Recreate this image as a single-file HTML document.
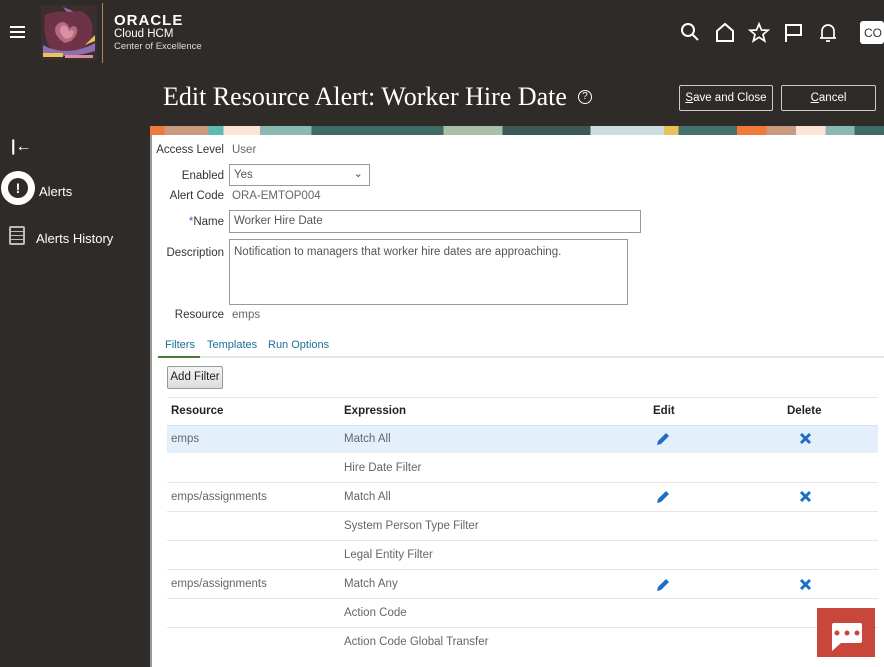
<!DOCTYPE html>
<html><head><style>
*{margin:0;padding:0;box-sizing:border-box}
body{width:884px;height:667px;overflow:hidden;background:#2f2b28;font-family:"Liberation Sans",sans-serif;position:relative}
.a{position:absolute}
.w{color:#fff}
.lbl{font-size:11.5px;color:#333;text-align:right;width:74px;left:150px}
.val{font-size:11.5px;color:#666}
.inp{border:1px solid #999;background:#fff;font-size:11.5px;color:#555;padding:4px 4px}
.th{font-size:11.5px;font-weight:bold;color:#222}
.td{font-size:11.5px;color:#666}
.ln{left:167px;width:711px;height:1px;background:#e6e6e6}
</style></head><body>
<!-- header -->
<div class="a" style="left:10px;top:26px;width:15px;height:2px;background:#fff;box-shadow:0 5px #fff,0 10px #fff"></div>
<svg class="a" style="left:41px;top:5px" width="56" height="55" viewBox="0 0 56 55">
<rect x="0" y="0" width="56" height="55" fill="#3a2f2e"/>
<path d="M22 2 L32 6 L28 10Z" fill="#8f6fb0"/>
<path d="M4 10 C16 4 30 8 40 6 C50 10 54 22 50 36 C44 46 30 50 12 46 C4 40 2 22 4 10Z" fill="#6e3346"/>
<path d="M16 20 C22 12 30 22 28 24 C34 16 42 26 30 36 L24 38 C14 32 12 24 16 20Z" fill="#b66a82"/>
<path d="M20 22 C24 18 28 24 28 27 C31 22 36 28 29 33 L25 34 C19 30 18 25 20 22Z" fill="#d9919f"/>
<path d="M2 40 C20 50 40 46 54 38 L54 46 C36 52 16 52 2 48Z" fill="#8f6fb0"/>
<rect x="2" y="48" width="20" height="4" fill="#e8c35a"/>
<rect x="24" y="50" width="28" height="3" fill="#d98fa0"/>
<path d="M44 40 L54 30 L54 36Z" fill="#e8c35a"/>
</svg>
<div class="a" style="left:102px;top:3px;width:1px;height:60px;background:#b08a4a"></div>
<div class="a w" style="left:114px;top:12px;font-size:15px;font-weight:bold;letter-spacing:1px">ORACLE</div>
<div class="a w" style="left:114px;top:28px;font-size:11.5px">Cloud HCM</div>
<div class="a" style="left:114px;top:41px;font-size:9.5px;color:#ddd">Center of Excellence</div>
<svg class="a" style="left:680px;top:22px" width="170" height="22" viewBox="0 0 170 22" fill="none" stroke="#fff" stroke-width="2">
<circle cx="8" cy="8" r="6"/><path d="M12.5 12.5 L18 18"/>
<path d="M37 19 V9 L45 2 L53 9 V19 Z"/>
<path d="M79 2 L81.5 8 L88 8.3 L83 12.5 L84.7 19 L79 15.3 L73.3 19 L75 12.5 L70 8.3 L76.5 8 Z" stroke-width="1.7"/>
<path d="M106 20 V3 H121 V13 H106"/>
<path d="M142 16 V9 A6 6 0 0 1 154 9 V16 Z M140 16 H156 M146 19 H150" stroke-width="1.7"/>
</svg>
<div class="a" style="left:860px;top:21px;width:24px;height:23px;background:#fff;border-radius:3px;font-size:12px;color:#333;padding:5px 0 0 4px">CO</div>
<div class="a w" style="left:163px;top:82px;font-family:'Liberation Serif',serif;font-size:26px">Edit Resource Alert: Worker Hire Date</div>
<div class="a" style="left:578px;top:90px;width:14px;height:14px;border:1.5px solid #fff;border-radius:50%;color:#fff;font-size:10px;text-align:center;line-height:11px">?</div>
<div class="a w" style="left:679px;top:85px;width:94px;height:26px;border:1px solid #ccc;border-radius:2px;font-size:11.5px;text-align:center;line-height:24px"><u>S</u>ave and Close</div>
<div class="a w" style="left:781px;top:85px;width:95px;height:26px;border:1px solid #ccc;border-radius:2px;font-size:11.5px;text-align:center;line-height:24px"><u>C</u>ancel</div>
<!-- sidebar -->
<div class="a w" style="left:11px;top:138px;font-size:16px;font-weight:bold">|←</div>
<div class="a" style="left:1px;top:171px;width:34px;height:34px;border-radius:50%;background:#fff"></div>
<div class="a" style="left:8px;top:178px;width:20px;height:20px;border-radius:50%;background:#2f2b28;color:#fff;font-weight:bold;font-size:14px;text-align:center;line-height:20px">!</div>
<div class="a w" style="left:39px;top:184px;font-size:13px">Alerts</div>
<div class="a" style="left:9px;top:226px;width:16px;height:19px;border:2px solid #bbb;border-radius:2px;background:repeating-linear-gradient(#2f2b28 0 3px,#bbb 3px 4px)"></div>
<div class="a w" style="left:36px;top:231px;font-size:13px">Alerts History</div>
<!-- content -->
<div class="a" style="left:150px;top:126px;width:734px;height:541px;background:#fff;border-left:2px solid #999"></div>
<div class="a" style="left:150px;top:126px;width:734px;height:9px;background:linear-gradient(90deg,#f07a3a 0 2%,#c99a80 2% 8%,#5fb9b5 8% 10%,#fde3d6 10% 15%,#8ab9b5 15% 22%,#3e6a68 22% 40%,#a8c0a8 40% 48%,#3b5a55 48% 60%,#cbdde0 60% 70%,#e8c35a 70% 72%,#44706d 72% 80%,#f07a3a 80% 84%,#c99a80 84% 88%,#fde3d6 88% 92%,#8ab9b5 92% 96%,#3e6a68 96%)"></div>
<div class="a lbl" style="top:144px;left:150px;width:74px">Access Level</div><div class="a val" style="left:232px;top:144px">User</div>
<div class="a lbl" style="top:170px">Enabled</div>
<div class="a inp" style="left:229px;top:164px;width:141px;height:22px">Yes<span style="position:absolute;right:6px;top:1px;color:#555">⌄</span></div>
<div class="a lbl" style="top:190px">Alert Code</div><div class="a val" style="left:232px;top:190px">ORA-EMTOP004</div>
<div class="a lbl" style="top:216px"><span style="color:#36c">*</span>Name</div>
<div class="a inp" style="left:229px;top:210px;width:412px;height:23px">Worker Hire Date</div>
<div class="a lbl" style="top:247px">Description</div>
<div class="a inp" style="left:229px;top:239px;width:399px;height:66px;padding:6px 4px">Notification to managers that worker hire dates are approaching.</div>
<div class="a lbl" style="top:309px">Resource</div><div class="a val" style="left:232px;top:309px">emps</div>
<div class="a" style="left:165px;top:339px;font-size:11px;color:#1b6e98">Filters</div>
<div class="a" style="left:207px;top:339px;font-size:11px;color:#1b6e98">Templates</div>
<div class="a" style="left:268px;top:339px;font-size:11px;color:#1b6e98">Run Options</div>
<div class="a" style="left:158px;top:356px;width:726px;height:2px;background:#e6e6e6"></div>
<div class="a" style="left:158px;top:356px;width:42px;height:2px;background:#4d7a3a"></div>
<div class="a" style="left:167px;top:366px;width:56px;height:23px;border:1px solid #999;border-radius:2px;background:linear-gradient(#f4f4f4,#ddd);font-size:11.5px;color:#222;text-align:center;line-height:21px">Add Filter</div>
<div class="a ln" style="top:397px"></div>
<div class="a th" style="left:171px;top:405px">Resource</div>
<div class="a th" style="left:344px;top:405px">Expression</div>
<div class="a th" style="left:653px;top:405px">Edit</div>
<div class="a th" style="left:787px;top:405px">Delete</div>
<div class="a" style="left:167px;top:425px;width:711px;height:28px;background:#e3effb;border-top:1px solid #d6e3ef"></div>
<div class="a td" style="left:171px;top:433px">emps</div><div class="a td" style="left:344px;top:433px">Match All</div>
<div class="a td" style="left:344px;top:462px">Hire Date Filter</div>
<div class="a ln" style="top:482px"></div>
<div class="a td" style="left:171px;top:491px">emps/assignments</div><div class="a td" style="left:344px;top:491px">Match All</div>
<div class="a ln" style="top:511px"></div>
<div class="a td" style="left:344px;top:520px">System Person Type Filter</div>
<div class="a ln" style="top:540px"></div>
<div class="a td" style="left:344px;top:549px">Legal Entity Filter</div>
<div class="a ln" style="top:569px"></div>
<div class="a td" style="left:171px;top:578px">emps/assignments</div><div class="a td" style="left:344px;top:578px">Match Any</div>
<div class="a ln" style="top:598px"></div>
<div class="a td" style="left:344px;top:607px">Action Code</div>
<div class="a ln" style="top:627px"></div>
<div class="a td" style="left:344px;top:636px">Action Code Global Transfer</div>
<svg class="a" style="left:0;top:0" width="884" height="667">
<g fill="#1d6fc6"><path d="M657 445 L658 441 L666 433 L669 436 L661 444 Z"/><path d="M657 503 L658 499 L666 491 L669 494 L661 502 Z"/><path d="M657 591 L658 587 L666 579 L669 582 L661 590 Z"/></g>
<g stroke="#1d6fc6" stroke-width="3"><path d="M801 434 L810 443 M810 434 L801 443"/><path d="M801 492 L810 501 M810 492 L801 501"/><path d="M801 580 L810 589 M810 580 L801 589"/></g>
<rect x="817" y="608" width="58" height="49" fill="#c8473a"/>
<path d="M832 623 H860 Q862 623 862 625 V641 Q862 643 860 643 H841 L832 651 V625 Q832 623 834 623Z" fill="#fff"/>
<g fill="#c8473a"><circle cx="837" cy="633" r="2.5"/><circle cx="847" cy="633" r="2.5"/><circle cx="857" cy="633" r="2.5"/></g>
</svg>
</body></html>
